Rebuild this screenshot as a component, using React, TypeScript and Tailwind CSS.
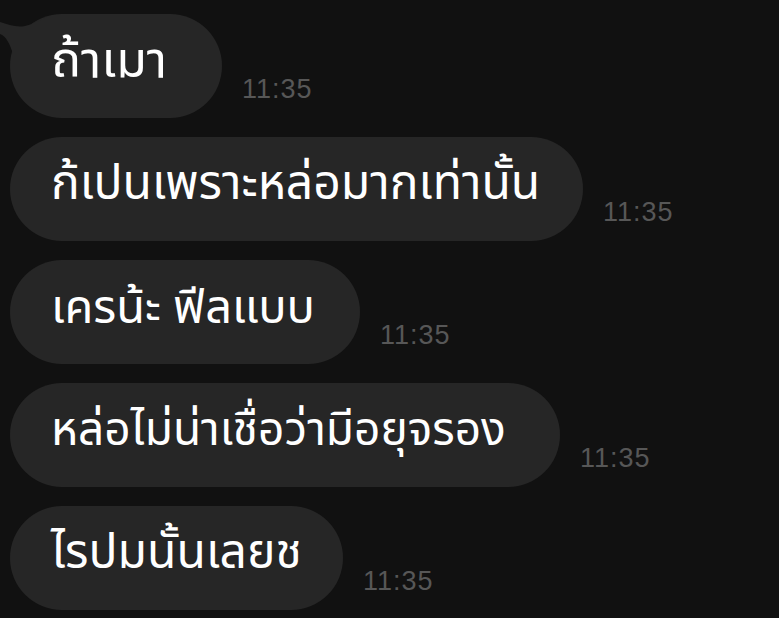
import React from "react";

const messages = [
  { text: "ถ้าเมา", width: "w-[212px]", size: "text-[50px]" },
  { text: "ก้เปนเพราะหล่อมากเท่านั้น", width: "w-[573px]", size: "text-[48px]" },
  { text: "เครน้ะ ฟีลแบบ", width: "w-[350px]", size: "text-[47px]" },
  { text: "หล่อไม่น่าเชื่อว่ามีอยุจรอง", width: "w-[550px]", size: "text-[46px]" },
  { text: "ไรปมนั้นเลยช", width: "w-[333px]", size: "text-[48px]" },
];

// little notch on the first bubble
const Tail = () => (
  <svg className="absolute -left-[10px] top-0" width="50" height="40" viewBox="0 0 50 40">
    <path
      d="M0 8 C8 10 16 14 25 12 C35 10 42 4 50 2 L50 40 L13 40 C10 30 6 22 0 20 Z"
      fill="#262626"
    />
  </svg>
);

const App = () => {
  return (
    <div className="w-[779px] h-[618px] overflow-hidden bg-[#111111] pt-[14px] pl-[10px]">
      <div className="flex flex-col gap-[19px]">
        {messages.map((m, i) => (
          <div key={i} className="flex items-end gap-[20px]">
            <div
              className={`relative h-[104px] ${m.width} ${m.size} rounded-full bg-[#262626] flex items-center pl-[41px] pb-[8px] leading-none text-white whitespace-nowrap font-['Noto_Sans_Thai','Noto_Sans',sans-serif]`}
            >
              {i === 0 && <Tail />}
              <span className="relative">{m.text}</span>
            </div>
            <span className="mb-[15px] text-[27px] tracking-[1px] leading-none text-[#575757] font-['Liberation_Sans',sans-serif]">
              11:35
            </span>
          </div>
        ))}
      </div>
    </div>
  );
};

export default App;
